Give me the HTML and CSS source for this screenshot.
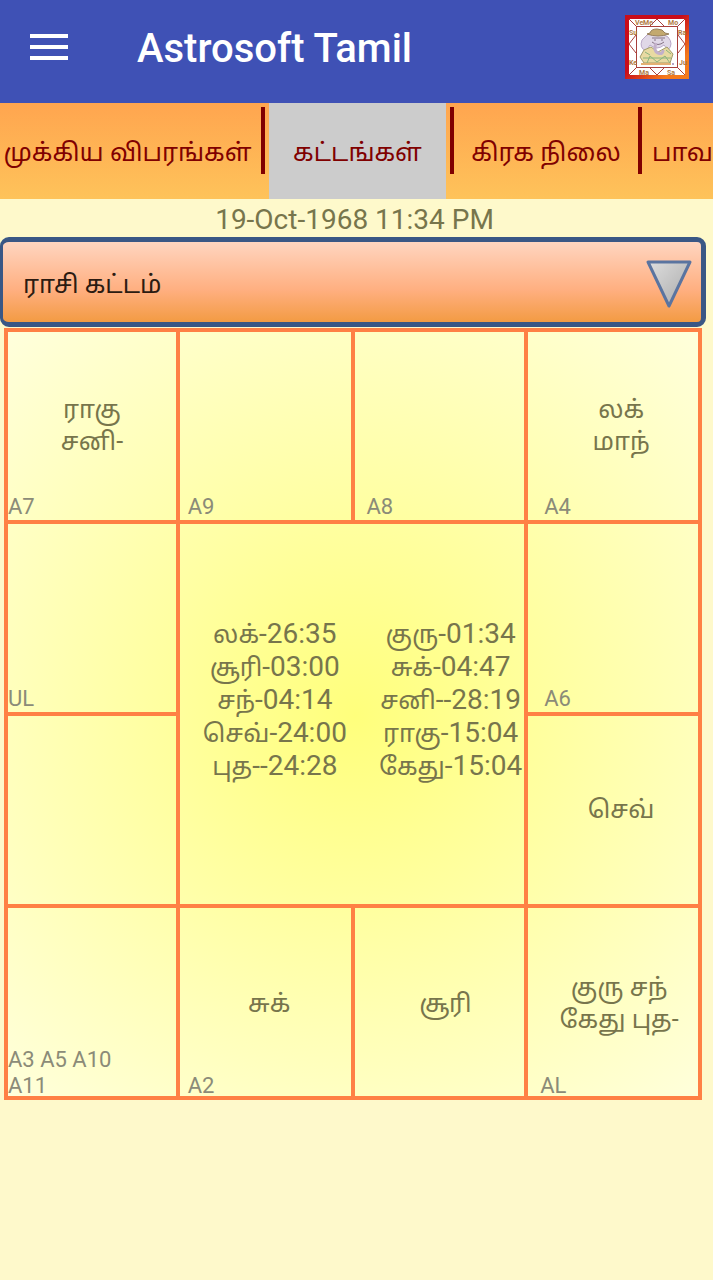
FILE: index.html
```html
<!DOCTYPE html>
<html lang="ta">
<head>
<meta charset="utf-8">
<meta name="viewport" content="width=device-width, initial-scale=1">
<title>Astrosoft Tamil</title>
<link rel="stylesheet" href="styles.css">
</head>
<body>
<header class="app-bar">
  <button class="menu-button" type="button" aria-label="Menu">
    <svg width="38" height="26" viewBox="0 0 38 26" aria-hidden="true"><path d="M0 2h38M0 13h38M0 24h38" stroke="#fff" stroke-width="4"/></svg>
  </button>
  <h1 class="app-title">Astrosoft Tamil</h1>
  <svg class="logo" viewBox="0 0 64 64" role="img" aria-label="Astrosoft">
    <defs>
      <linearGradient id="frame" x1="0" y1="0" x2="1" y2="1">
        <stop offset="0.45" stop-color="#c80d1a"/><stop offset="0.8" stop-color="#f47a1c"/>
      </linearGradient>
    </defs>
    <rect width="64" height="64" fill="url(#frame)"/>
    <rect x="4" y="4" width="56" height="56" fill="#fff"/>
    <g fill="none" stroke="#a8403c" stroke-width="1">
      <rect x="11.500" y="11.500" width="41" height="41"/>
      <path d="M4 4l8 8M60 4l-8 8M4 60l8-8M60 60l-8-8M25 11l7-7 7 7M25 53l7 7 7-7M11 20l-7 9 7 9M53 20l7 9-7 9"/>
    </g>
    <g class="logo-text">
      <text x="10" y="10">Ve</text><text x="18" y="10">Me</text><text x="43" y="10">Mo</text>
      <text x="4" y="20">Su</text><text x="53" y="20">Ra</text>
      <text x="4" y="50">Ke</text><text x="54" y="50">Ju</text>
      <text x="14" y="60">Ma</text><text x="42" y="60">Sa</text>
    </g>
    <g opacity="0.8">
      <path d="M17 25q-3 8 4 11l4-6q7 6 14 0l4 5q6-6 0-13-11-7-21-2z" fill="#d9cfe2" stroke="#a893bb"/>
      <path d="M25 18q1-4 7-4t8 4l4 1q-11 4-22 0z" fill="#b5944c" stroke="#7d6034"/>
      <path d="M27 23h13M27 27q6 5 12 0M29 25h2m5 0h2" fill="none" stroke="#665067"/>
      <path d="M19 35l7-3 7 5 9-5 6 7-3 9H19l-4-6z" fill="#e3d18c" stroke="#8b8446"/>
      <path d="M18 43h28M22 48l3-7 7 6 8-6 5 7M20 37l5 3m16-5 5 4" fill="none" stroke="#6fa25d" stroke-width="1"/>
      <path d="M31 28q-3 8 2 10t5-3" fill="none" stroke="#b39dbe" stroke-width="3"/>
      <path d="M16 49h30" stroke="#de9e51" stroke-width="2"/>
      <circle cx="48" cy="49" r="1" fill="#8668a3"/>
    </g>
  </svg>
</header>

<nav class="tabs">
  <button class="tab tab-details" type="button">முக்கிய விபரங்கள்</button>
  <button class="tab tab-charts" type="button" aria-current="page">கட்டங்கள்</button>
  <button class="tab tab-planets" type="button">கிரக நிலை</button>
  <button class="tab tab-bhava" type="button">பாவ</button>
</nav>

<main>
  <p class="birth-time">19-Oct-1968 11:34 PM</p>
  <div class="picker">
    <select class="picker-select" aria-label="கட்டம்"><option>ராசி கட்டம்</option></select>
    <svg class="picker-arrow" width="46" height="50" viewBox="0 0 46 50" aria-hidden="true">
      <defs><linearGradient id="arrow" x1="0" y1="0" x2="1" y2="1"><stop offset="0" stop-color="#dedede"/><stop offset="1" stop-color="#a9a9a9"/></linearGradient></defs>
      <path d="M2 3h42L23 47z" fill="url(#arrow)" stroke="#5a74a0" stroke-width="3" stroke-linejoin="round"/>
    </svg>
  </div>

  <section class="chart">
    <div class="cell"><p class="planets">ராகு<br>சனி-</p><p class="pada">A7</p></div>
    <div class="cell second"><p class="pada">A9</p></div>
    <div class="cell third"><p class="pada">A8</p></div>
    <div class="cell fourth"><p class="planets">லக்<br>மாந்</p><p class="pada">A4</p></div>
    <div class="cell"><p class="pada">UL</p></div>
    <div class="cell degrees">
      <ul class="degree-list">
        <li>லக்<span class="degree">-26:35</span></li>
        <li>சூரி<span class="degree">-03:00</span></li>
        <li>சந்<span class="degree">-04:14</span></li>
        <li>செவ்<span class="degree">-24:00</span></li>
        <li>புத<span class="degree">--24:28</span></li>
      </ul>
      <ul class="degree-list">
        <li>குரு<span class="degree">-01:34</span></li>
        <li>சுக்<span class="degree">-04:47</span></li>
        <li>சனி<span class="degree">--28:19</span></li>
        <li>ராகு<span class="degree">-15:04</span></li>
        <li>கேது<span class="degree">-15:04</span></li>
      </ul>
    </div>
    <div class="cell fourth"><p class="pada">A6</p></div>
    <div class="cell"></div>
    <div class="cell fourth"><p class="planets">செவ்</p></div>
    <div class="cell bottom"><p class="pada">A3 A5 A10<br>A11</p></div>
    <div class="cell bottom second"><p class="planets">சுக்</p><p class="pada">A2</p></div>
    <div class="cell bottom third"><p class="planets">சூரி</p></div>
    <div class="cell bottom last"><p class="planets">குரு சந்<br>கேது புத-</p><p class="pada">AL</p></div>
  </section>
</main>
</body>
</html>
```
FILE: styles.css
```css
* { box-sizing: border-box; }

body {
  margin: 0;
  min-height: 100vh;
  overflow-x: hidden;
  background: #fef9cb;
  color: #77754c;
  font-family: Roboto, "Noto Sans Tamil", "Noto Sans", sans-serif;
  font-size: 25px;
}

p, h1 { margin: 0; }

button, select { font: inherit; }

.app-bar {
  display: flex;
  align-items: center;
  height: 103px;
  padding: 0 24px 10px 30px;
  background: #3f51b5;
}

.menu-button {
  display: flex;
  padding: 0;
  border: 0;
  background: none;
}

.app-title {
  flex: 1;
  margin-left: 69px;
  padding-top: 4px;
  color: #fff;
  font-size: 40px;
  font-weight: 500;
  line-height: 48px;
}

.logo { width: 64px; height: 64px; }

.logo-text {
  fill: #ae793e;
  font-size: 7px;
  font-weight: 700;
}

.tabs {
  display: flex;
  height: 96px;
  overflow: hidden;
  background: linear-gradient(#ffa54f, #fec35a);
}

.tab {
  flex: none;
  padding: 6px 0 0;
  border: 0;
  background: linear-gradient(#800000, #800000) no-repeat right 4px top 4px / 4px 67px;
  color: #800000;
  white-space: nowrap;
}

.tab-details { width: 269px; padding-right: 14px; }
.tab-charts { width: 177px; background: #ccc; }
.tab-planets {
  width: 200px;
  background:
    linear-gradient(#800000, #800000) no-repeat left 4px top 4px / 4px 67px,
    linear-gradient(#800000, #800000) no-repeat right 4px top 4px / 4px 67px;
}
.tab-bhava { padding-left: 6px; background: none; }

.birth-time {
  padding: 2px 4px 0 0;
  height: 38px;
  font-size: 28px;
  line-height: 38px;
  text-align: center;
}

.picker {
  display: flex;
  align-items: center;
  position: relative;
  height: 90px;
  margin-right: 7px;
}

.picker-select {
  width: 100%;
  height: 100%;
  padding: 4px 70px 0 20px;
  appearance: none;
  border: 5px solid #3a5785;
  border-left-width: 3px;
  border-radius: 9px;
  background: linear-gradient(#ffd5c0, #ffaf80 60%, #f39b43);
  color: #2c1b11;
}

.picker-arrow {
  position: absolute;
  top: 22px;
  right: 14px;
  pointer-events: none;
}

.chart {
  display: grid;
  grid-template-columns: 172fr 175fr 174fr 174fr;
  grid-auto-rows: minmax(192px, auto);
  margin: 1px 11px 0 4px;
  border: solid #ff8045;
  border-width: 4px 0 0 4px;
  background: radial-gradient(circle farthest-corner, #ffff7c, #ffffdc);
}

.cell {
  display: grid;
  align-items: center;
  border: solid #ff8045;
  border-width: 0 4px 4px 0;
}

.cell > * { grid-area: 1 / 1; }

.planets {
  line-height: 32px;
  text-align: center;
}

.pada {
  align-self: end;
  color: #8b8b78;
  font-size: 22px;
  line-height: 26px;
}

.second { padding-left: 8px; }
.third { padding-left: 12px; }
.fourth { padding-left: 16px; }
.last { padding-left: 12px; }

.bottom .planets { padding-top: 4px; }
.bottom .pada { line-height: 26px; margin-bottom: -3px; }

.degrees {
  display: flex;
  grid-area: 2 / 2 / span 2 / span 2;
  justify-content: flex-end;
  gap: 32px;
  padding: 0 2px 30px 0;
  text-align: center;
  white-space: nowrap;
}

.degree-list {
  display: grid;
  grid-auto-rows: 33px;
  margin: 0;
  padding: 0;
  line-height: 33px;
  list-style: none;
}

.degree { font-size: 28px; }
```
